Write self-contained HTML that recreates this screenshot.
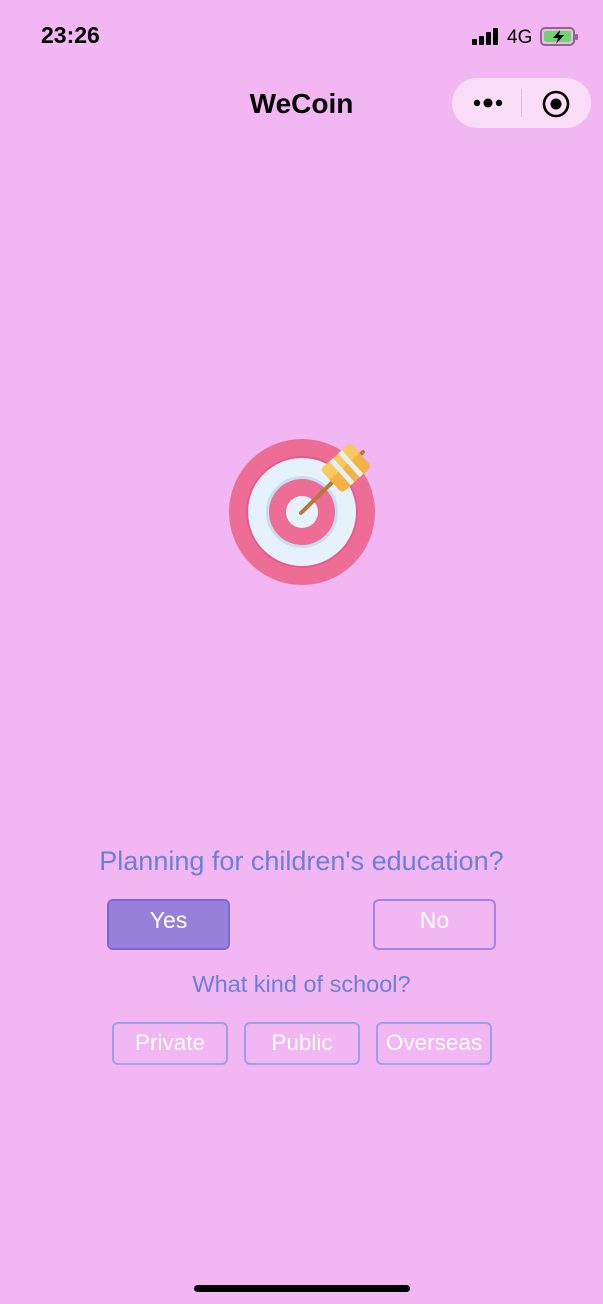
<!DOCTYPE html>
<html><head><meta charset="utf-8"><style>
*{margin:0;padding:0;box-sizing:border-box}
body{width:603px;height:1304px;background:#f2b6f2;font-family:"Liberation Sans",sans-serif;position:relative;overflow:hidden}
.abs{position:absolute}
.btn{position:absolute;border:2px solid #a184e6;border-radius:6px;color:#fff;text-align:center}
.sm{border:2px solid #9f9fe8;border-radius:6px;position:absolute;color:#fff;text-align:center;font-size:22.5px;line-height:37px;height:43px;width:116px;top:1022px}
</style></head><body>
<div class="abs" style="left:41px;top:22px;font-size:23px;font-weight:bold;color:#000">23:26</div>
<svg class="abs" style="left:472px;top:28px" width="30" height="18"><rect x="0" y="11" width="5" height="6" rx="1"/><rect x="7" y="8" width="5" height="9" rx="1"/><rect x="14" y="4" width="5" height="13" rx="1"/><rect x="21" y="0" width="5" height="17" rx="1"/></svg>
<div class="abs" style="left:507px;top:27px;font-size:19px;color:#000">4G</div>
<svg class="abs" style="left:540px;top:27px" width="40" height="20"><rect x="1" y="1" width="33" height="17" rx="4" fill="none" stroke="#8a6a8a" stroke-width="2"/><rect x="4" y="4" width="27" height="11" rx="2" fill="#6fd36f"/><rect x="35" y="7" width="3" height="6" rx="1" fill="#8a6a8a"/><path d="M20 3 L13 11 H18 L16 17 L24 8 H19 Z" fill="#000"/></svg>
<div class="abs" style="left:0;width:603px;top:88px;text-align:center;font-size:28px;font-weight:bold;color:#000">WeCoin</div>
<div class="abs" style="left:452px;top:78px;width:139px;height:50px;border-radius:25px;background:#f9dcf6"></div>
<div class="abs" style="left:521px;top:89px;width:1px;height:28px;background:#e2bcdf"></div>
<svg class="abs" style="left:472px;top:95px" width="34" height="16"><circle cx="5" cy="8" r="3.2"/><circle cx="16" cy="8" r="4.5"/><circle cx="27" cy="8" r="3.2"/></svg>
<svg class="abs" style="left:541px;top:89px" width="30" height="30"><circle cx="15" cy="15" r="12" fill="none" stroke="#000" stroke-width="2.6"/><circle cx="15" cy="15" r="5.5"/></svg>
<svg class="abs" style="left:220px;top:430px" width="170" height="170">
<circle cx="82" cy="82" r="73" fill="#ee6d96"/>
<circle cx="82" cy="82" r="56" fill="#e85a89"/>
<circle cx="82" cy="82" r="54" fill="#e6f2fb"/>
<circle cx="82" cy="82" r="36" fill="#c5def0"/>
<circle cx="82" cy="82" r="33" fill="#ee6d96"/>
<circle cx="82" cy="82" r="16" fill="#e6f2fb"/>
<line x1="81" y1="83" x2="143" y2="22" stroke="#b5793d" stroke-width="4" stroke-linecap="round"/>
<g transform="rotate(-42 126 38)"><rect x="106" y="22" width="40" height="32" rx="4" fill="#f4b244"/><rect x="106" y="22" width="40" height="14" rx="3" fill="#f8c95c"/><rect x="118" y="22" width="5" height="32" fill="#e4f0f6"/><rect x="130" y="22" width="5" height="32" fill="#e4f0f6"/></g>
</svg>
<div class="abs" style="left:0;width:603px;top:846px;text-align:center;font-size:27px;color:#6c7fd6">Planning for children's education?</div>
<div class="btn" style="left:107px;top:899px;width:123px;height:51px;background:#9681da;border-color:#7f68d2;font-size:23px;line-height:39px">Yes</div>
<div class="btn" style="left:373px;top:899px;width:123px;height:51px;font-size:23px;line-height:39px">No</div>
<div class="abs" style="left:0;width:603px;top:971px;text-align:center;font-size:23.5px;color:#6c7fd6">What kind of school?</div>
<div class="sm" style="left:112px">Private</div>
<div class="sm" style="left:244px">Public</div>
<div class="sm" style="left:376px">Overseas</div>
<div class="abs" style="left:194px;top:1285px;width:216px;height:7px;border-radius:4px;background:#000"></div>
</body></html>
